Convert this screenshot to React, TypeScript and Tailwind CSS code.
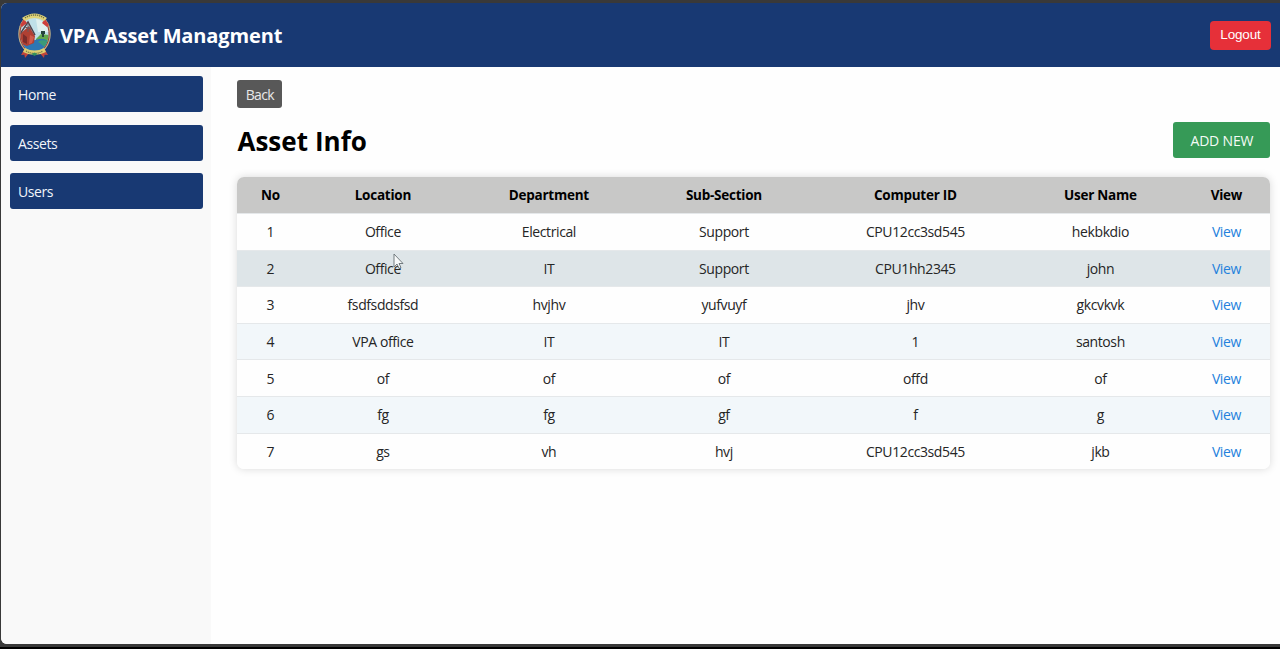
import React from "react";

const nav = ["Home", "Assets", "Users"];
const headings = ["No", "Location", "Department", "Sub-Section", "Computer ID", "User Name", "View"];
const rows = [
  ["1", "Office", "Electrical", "Support", "CPU12cc3sd545", "hekbkdio"],
  ["2", "Office", "IT", "Support", "CPU1hh2345", "john"],
  ["3", "fsdfsddsfsd", "hvjhv", "yufvuyf", "jhv", "gkcvkvk"],
  ["4", "VPA office", "IT", "IT", "1", "santosh"],
  ["5", "of", "of", "of", "offd", "of"],
  ["6", "fg", "fg", "gf", "f", "g"],
  ["7", "gs", "vh", "hvj", "CPU12cc3sd545", "jkb"],
];
const columns = "grid grid-cols-[66px_159px_173px_177px_206px_164px_88px] items-center text-center";

function rowColor(i: number) {
  if (i === 1) return "bg-[#dee5e8]";
  return i % 2 ? "bg-[#f2f7fa]" : "bg-[#fefefe]";
}

function Crest() {
  return (
    <svg className="h-[48px] w-[36px]" viewBox="0 0 36 48">
      <defs>
        <clipPath id="shield">
          <ellipse cx="18.5" cy="23" rx="14" ry="18.5" />
        </clipPath>
      </defs>
      <path d="M9 37 5 44l3.4-.2L9 47l6-7zM28 37l4 7-3.4-.2L28 47l-6-7z" fill="#c2453b" />
      <ellipse cx="18.5" cy="23" rx="16.2" ry="20" fill="#c9b98a" />
      <ellipse cx="18.5" cy="23" rx="15.2" ry="19.2" fill="#9c4438" />
      <g clipPath="url(#shield)">
        <path d="M0 0h36v48H0z" fill="#bfe0e8" />
        <path d="M20 8c7 1 11 7 13 13H22z" fill="#dff0ef" />
        <path d="M20 28l5-5 9 1v8H20z" fill="#62a94c" />
        <path d="M19 29c5-1 7-3 15 2v13H3V33z" fill="#2d77b4" />
        <path d="M22 31c4-3 7-1 11-1l-3 6c-3 0-4-3-8-5z" fill="#3b9b78" />
        <path d="M3 24 13 15l6 10-1 7-7 3-8-3z" fill="#b04033" />
        <path d="m4 23 8-12 7 13" fill="none" stroke="#51424b" strokeWidth="1.5" />
        <path d="M12 12v9M9 16l6 2" fill="none" stroke="#6b5a60" strokeWidth="1" />
        <path d="m14 24 4 2-2 6-3 1z" fill="#d25c4b" />
        <path d="M7 23l4 3v7l-4-2z" fill="#7b2c2a" />
        <path d="M25 20h4v3h-4zM26 23h2v3h-2z" fill="#25443c" />
      </g>
      <path d="M4 14 8 8l3 4-5 4zM33 14l-4-6-3 4 5 4z" fill="#cc3f3c" />
      <path d="M6 7Q18.500-2 31 7l-3 3Q18.500 4 9 10z" fill="#ded379" />
      <path d="M9 7Q18.500 1 28 7" fill="none" stroke="#6f7146" strokeWidth="1.3" strokeDasharray="1.3 .8" />
      <path d="M9 37Q18.500 42 28 37l2 4Q18.500 47 7 41z" fill="#ddcf70" />
      <path d="M10 40Q18.500 45 27 40" fill="none" stroke="#75734b" strokeWidth="1.2" strokeDasharray="1.2 .8" />
      <path d="m15.500 43 3-1.5 3 1.500-3 2z" fill="#32915c" />
    </svg>
  );
}

export default function App() {
  return (
    <div className="relative flex h-[649px] w-[1280px] flex-col overflow-hidden border-b-[2px] border-black bg-[#393939] pt-[3px] pl-px font-['Open_Sans','Noto_Sans',sans-serif] text-[14px] tracking-[-0.4px] text-[#252525]">
      <div className="flex h-[641px] w-full flex-col overflow-hidden rounded-tl-[6px] rounded-bl-[6px] bg-[#fefefe]">
        <header className="flex h-[64px] shrink-0 items-center justify-between bg-[#183973] pr-[9px] pl-[15px]">
          <div className="flex items-center gap-[8px]">
            <Crest />
            <h1 className="pt-[2px] text-[20px] font-bold tracking-[-0.13px] whitespace-nowrap text-white">VPA Asset Managment</h1>
          </div>
          <button className="h-[29px] w-[61px] rounded-[4px] bg-[#e63039] font-['Liberation_Sans',sans-serif] text-[13.5px] tracking-[-0.17px] text-white">
            Logout
          </button>
        </header>
        <div className="flex min-h-0 flex-1">
          <aside className="flex w-[210px] shrink-0 flex-col gap-[12.6px] bg-[#f9f9f9] pt-[9px] pl-[9px]">
            {nav.map((n) => (
              <a key={n} className="flex h-[36px] w-[193px] items-center rounded-[3px] bg-[#183973] pt-px pl-[8px] text-[#f2f5fa]">
                {n}
              </a>
            ))}
          </aside>
          <main className="flex flex-1 flex-col items-start pt-[13px] pl-[26.4px]">
            <button className="h-[28px] w-[45px] rounded-[3px] bg-[#585858] tracking-[-0.6px] text-[#e8e8e8]">Back</button>
            <div className="mt-[14px] flex h-[36px] w-[1033px] items-center justify-between">
              <h2 className="pt-[2px] text-[26px] font-bold tracking-[0.05px] text-black">Asset Info</h2>
              <button className="h-[36px] w-[97px] rounded-[3px] bg-[#369a57] tracking-[-0.17px] text-[#f4fbf6]">ADD NEW</button>
            </div>
            <div className="mt-[19px] w-[1033px] overflow-hidden rounded-[7px] shadow-[0_0_8px_rgba(0,0,0,0.15)]">
              <div className={`${columns} h-[36px] bg-[#c8c8c7] pt-px text-[13.5px] font-bold tracking-[-0.25px] text-black`}>
                {headings.map((h) => (
                  <div key={h}><span>{h}</span></div>
                ))}
              </div>
              {rows.map((r, i) => (
                <div key={i} className={`${columns} h-[36.6px] border-t border-[#e5e8ea] ${rowColor(i)}`}>
                  {r.map((c, j) => (
                    <div key={j}><span>{c}</span></div>
                  ))}
                  <a className="text-[#2381dc]">View</a>
                </div>
              ))}
            </div>
          </main>
        </div>
      </div>
      <svg className="absolute top-[253px] left-[393px] h-[18px] w-[12px]" viewBox="0 0 12 18">
        <path d="M1 1v13l3-3 2 4.5 2-1-2-4h4z" fill="#f8fafa" stroke="#687075" strokeWidth=".9" />
      </svg>
    </div>
  );
}
